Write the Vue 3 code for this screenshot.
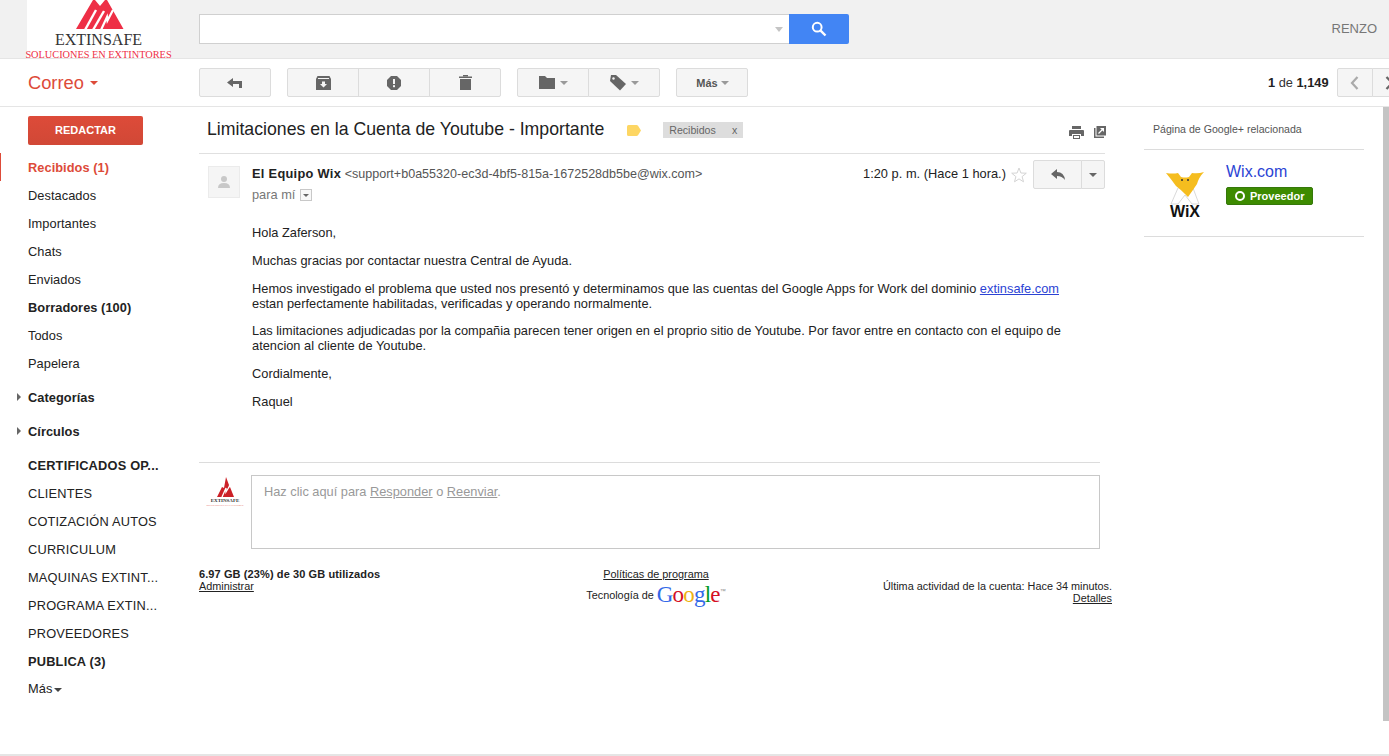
<script setup>
const plainItems = [
  { label: 'Recibidos (1)', cls: 'active' },
  { label: 'Destacados' },
  { label: 'Importantes' },
  { label: 'Chats' },
  { label: 'Enviados' },
  { label: 'Borradores (100)', cls: 'bold' },
  { label: 'Todos' },
  { label: 'Papelera' }
]
const labels = [
  { label: 'CERTIFICADOS OP...', cls: 'bold' },
  { label: 'CLIENTES' },
  { label: 'COTIZACIÓN AUTOS' },
  { label: 'CURRICULUM' },
  { label: 'MAQUINAS EXTINT...' },
  { label: 'PROGRAMA EXTIN...' },
  { label: 'PROVEEDORES' },
  { label: 'PUBLICA (3)', cls: 'bold' }
]
</script>

<template>
  <div class="page">
    <header class="topbar">
      <div class="logo">
        <svg class="logo-mark" width="48" height="30" viewBox="0 0 48 30">
          <polygon points="0,29 17,0 19,0 24,6 29,0 31,0 47.5,29" fill="#ee2f46" />
          <path d="M9 30 L20 10" fill="none" stroke="#fff" stroke-width="2.4" />
          <path d="M17 30 L28 11" fill="none" stroke="#fff" stroke-width="2.4" />
          <path d="M25 30 L31 17 L31.5 20.5 L37 10" fill="none" stroke="#fff" stroke-width="2.2" />
        </svg>
        <div class="logo-name">EXTINSAFE</div>
        <div class="logo-sub">SOLUCIONES EN EXTINTORES</div>
      </div>
      <div class="search">
        <div class="search-input"><span class="search-caret"></span></div>
        <div class="search-btn">
          <svg width="16" height="16" viewBox="0 0 16 16">
            <circle cx="6.2" cy="6.2" r="4.4" fill="none" stroke="#fff" stroke-width="2" />
            <path d="M9.6 9.6 L14.5 14.5" stroke="#fff" stroke-width="2.4" />
          </svg>
        </div>
      </div>
      <div class="user">RENZO</div>
    </header>

    <div class="toolbar">
      <div class="correo">Correo <span class="correo-caret"></span></div>
      <div class="tools">
        <div class="btn-group g-reply">
          <div class="tbtn w72">
            <svg width="16" height="12" viewBox="0 0 16 12"><path d="M0 5.5 L6 1 V4 H15 V11 H12 V7 H6 V10 Z" fill="#666" /></svg>
          </div>
        </div>
        <div class="btn-group g-actions">
          <div class="tbtn w72">
            <svg width="15" height="14" viewBox="0 0 15 14"><path d="M1.5 0 H13.5 L15 3 V14 H0 V3 Z" fill="#666" /><path d="M2 2.5 H13" stroke="#f5f5f5" stroke-width="1" /><path d="M6 5.5 H9 V8 H11 L7.5 11.5 L4 8 H6 Z" fill="#f5f5f5" /></svg>
          </div>
          <div class="tbtn w72">
            <svg width="14" height="14" viewBox="0 0 14 14"><path d="M4 0 H10 L14 4 V10 L10 14 H4 L0 10 V4 Z" fill="#666" /><rect x="6" y="3" width="2" height="5" fill="#f5f5f5" /><rect x="6" y="9.2" width="2" height="2" fill="#f5f5f5" /></svg>
          </div>
          <div class="tbtn w72">
            <svg width="13" height="15" viewBox="0 0 13 15"><rect x="0" y="1.5" width="13" height="1.5" fill="#666" /><rect x="4" y="0" width="5" height="1.5" fill="#666" /><rect x="1" y="4" width="11" height="11" fill="#666" /></svg>
          </div>
        </div>
        <div class="btn-group g-move">
          <div class="tbtn w72 icon-caret">
            <svg width="16" height="13" viewBox="0 0 16 13"><path d="M0 0 H6 L8 2 H16 V13 H0 Z" fill="#666" /></svg>
            <span class="caret"></span>
          </div>
          <div class="tbtn w72 icon-caret">
            <svg width="16" height="16" viewBox="0 0 16 16"><path d="M1 0 H6 L16 9 L10 15.5 L0 6 Z" fill="#666" /><circle cx="3.5" cy="3.5" r="1.2" fill="#f5f5f5" /></svg>
            <span class="caret"></span>
          </div>
        </div>
        <div class="btn-group">
          <div class="tbtn w72 mas">Más <span class="caret mas-caret"></span></div>
        </div>
      </div>
      <div class="pager">
        <span class="pager-text"><b>1</b> de <b>1,149</b></span>
        <div class="btn-group pager-btns">
          <div class="tbtn pbtn">
            <svg width="9" height="14" viewBox="0 0 9 14"><path d="M7.5 1 L2 7 L7.5 13" fill="none" stroke="#aaa" stroke-width="2.2" /></svg>
          </div>
          <div class="tbtn pbtn">
            <svg width="9" height="14" viewBox="0 0 9 14"><path d="M1.5 1 L7 7 L1.5 13" fill="none" stroke="#666" stroke-width="2.2" /></svg>
          </div>
        </div>
      </div>
    </div>

    <div class="main">
      <aside class="sidebar">
        <div class="compose">REDACTAR</div>
        <nav class="nav">
          <div v-for="item in plainItems" :key="item.label" class="nav-item" :class="item.cls">{{ item.label }}</div>
          <div class="nav-item bold group-row"><span class="tri"></span>Categorías</div>
          <div class="nav-item bold group-row"><span class="tri"></span>Círculos</div>
          <div class="labels">
            <div v-for="item in labels" :key="item.label" class="nav-item label-item" :class="item.cls">{{ item.label }}</div>
          </div>
          <div class="nav-item more">Más<span class="more-caret"></span></div>
        </nav>
      </aside>

      <main class="content">
        <div class="subject">
          <h1 class="subject-title">Limitaciones en la Cuenta de Youtube - Importante</h1>
          <svg class="marker" width="14" height="11" viewBox="0 0 14 11"><path d="M1.5 0 H9.5 Q10.5 0 11 .7 L14 5.5 L11 10.3 Q10.5 11 9.5 11 H1.5 Q0 11 0 9.5 V1.5 Q0 0 1.5 0 Z" fill="#fdd663" /></svg>
          <span class="chip">Recibidos<span class="chip-x">x</span></span>
          <div class="subject-icons">
            <svg width="15" height="13" viewBox="0 0 15 13"><rect x="3" y="0" width="9" height="3" fill="#666" /><path d="M1 4 H14 Q15 4 15 5 V10 H12 V8 H3 V10 H0 V5 Q0 4 1 4 Z" fill="#666" /><rect x="4" y="9" width="7" height="4" fill="#666" /><rect x="5" y="10" width="5" height="2" fill="#fff" /></svg>
            <svg width="12" height="12" viewBox="0 0 12 12"><path d="M0 2 H1.5 V10.5 H10 V12 H0 Z" fill="#666" /><rect x="2.5" y="0" width="9.5" height="9.5" fill="#666" /><path d="M4.5 7.5 L9 3" stroke="#fff" stroke-width="1.3" /><path d="M6 2 H10 V6 Z" fill="#fff" /></svg>
          </div>
        </div>

        <div class="message">
          <div class="avatar">
            <svg width="14" height="14" viewBox="0 0 14 14"><circle cx="7" cy="4" r="3" fill="#c8c8c8" /><path d="M1 13 Q1 8 7 8 Q13 8 13 13 Z" fill="#c8c8c8" /></svg>
          </div>
          <div class="msg-main">
            <div class="msg-head">
              <div class="msg-from">
                <div class="from-line"><b class="from-name">El Equipo Wix</b> <span class="from-mail">&lt;support+b0a55320-ec3d-4bf5-815a-1672528db5be@wix.com&gt;</span></div>
                <div class="to-line">para mí <span class="to-btn"><span class="to-caret"></span></span></div>
              </div>
              <div class="msg-meta">
                <span class="msg-time">1:20 p. m. (Hace 1 hora.)</span>
                <svg class="star" width="16" height="16" viewBox="0 0 16 16"><path d="M8 1 L9.9 6 L15.3 6.2 L11.1 9.6 L12.5 14.8 L8 11.9 L3.5 14.8 L4.9 9.6 L0.7 6.2 L6.1 6 Z" fill="none" stroke="#d4d4d4" stroke-width="1" /></svg>
                <div class="btn-group reply-group">
                  <div class="tbtn reply-btn">
                    <svg width="14" height="12" viewBox="0 0 14 12"><path d="M0 5 L6 0 V3 Q13 3 14 11 Q11 7 6 7 V10 Z" fill="#666" /></svg>
                  </div>
                  <div class="tbtn reply-more"><span class="caret dark"></span></div>
                </div>
              </div>
            </div>
            <div class="msg-body">
              <p>Hola Zaferson,</p>
              <p>Muchas gracias por contactar nuestra Central de Ayuda.</p>
              <p class="tight">Hemos investigado el problema que usted nos presentó y determinamos que las cuentas del Google Apps for Work del dominio <a class="link">extinsafe.com</a><br />estan perfectamente habilitadas, verificadas y operando normalmente.</p>
              <p>Las limitaciones adjudicadas por la compañia parecen tener origen en el proprio sitio de Youtube. Por favor entre en contacto con el equipo de<br />atencion al cliente de Youtube.</p>
              <p>Cordialmente,</p>
              <p>Raquel</p>
            </div>
          </div>
        </div>

        <div class="reply-area">
          <div class="reply-avatar">
            <svg width="28" height="22" viewBox="0 0 28 22">
              <polygon points="6,21 11,11 13,12 15,1 18,9 17,12 19,11 23,21" fill="#cc2027" />
              <path d="M11 21 L15 12 L15 16 L18 11" fill="none" stroke="#fff" stroke-width="1.3" />
            </svg>
            <div class="ra-name">EXTINSAFE</div>
            <div class="ra-sub">SOLUCIONES EN EXTINTORES</div>
          </div>
          <div class="reply-box">Haz clic aquí para <u>Responder</u> o <u>Reenviar</u>.</div>
        </div>

        <footer class="foot">
          <div class="foot-left"><b>6.97 GB (23%) de 30 GB utilizados</b><br /><u>Administrar</u></div>
          <div class="foot-center">
            <u>Políticas de programa</u>
            <div class="tech">Tecnología de <span class="google"><i class="gb">G</i><i class="gr">o</i><i class="gy">o</i><i class="gb">g</i><i class="gg">l</i><i class="gr">e</i></span><span class="tm">™</span></div>
          </div>
          <div class="foot-right">Última actividad de la cuenta: Hace 34 minutos.<br /><u>Detalles</u></div>
        </footer>
      </main>

      <aside class="side">
        <div class="side-title">Página de Google+ relacionada</div>
        <div class="side-card">
          <div class="wix-logo">
            <svg width="38" height="42" viewBox="0 0 38 42">
              <path d="M12 24 L19 19 L27 24 L33 40 L26 40 L19 31 L12 40 L5 40 Z" fill="#fff" stroke="#cfcfcf" stroke-width="0.8" />
              <path d="M0 9 Q7 10 12 9 L15 13 Q19 14 23 13 L26 9 Q32 10 38 8 Q33 13 31 20 Q27 26 22 33 L19 30 Q14 25 10 22 Q5 15 0 9 Z" fill="#f5bd1f" />
              <circle cx="16" cy="16" r="1" fill="#333" />
              <circle cx="22" cy="16" r="1" fill="#333" />
            </svg>
            <div class="wix-text">WiX</div>
          </div>
          <div class="side-info">
            <div class="side-name">Wix.com</div>
            <div class="badge"><span class="badge-dot"></span>Proveedor</div>
          </div>
        </div>
      </aside>

      <div class="scrollbar"></div>
    </div>
    <div class="bottom-line"></div>
  </div>
</template>

<style>
html, body { margin: 0; padding: 0; background: #fff; overflow: hidden; }
</style>

<style scoped>
.page {
  width: 1389px;
  height: 756px;
  display: flex;
  flex-direction: column;
  overflow: hidden;
  font-family: "Liberation Sans", Arial, sans-serif;
  font-size: 12.8px;
  color: #222;
  background: #fff;
}
.topbar {
  height: 59px;
  box-sizing: border-box;
  flex: none;
  display: flex;
  background: #f1f1f1;
  border-bottom: 1px solid #e5e5e5;
  padding-left: 27px;
}
.logo {
  width: 143px;
  height: 58px;
  background: #fff;
  display: flex;
  flex-direction: column;
  align-items: center;
  font-family: "Liberation Serif", serif;
}
.logo-mark { flex: none; margin-left: 2px; }
.logo-name { font-size: 16px; line-height: 16px; color: #333; margin-top: 2px; }
.logo-sub { font-size: 10.3px; line-height: 9px; color: #ee2f46; margin-top: 2px; white-space: nowrap; }
.search { display: flex; margin: 14px 0 0 29px; height: 30px; }
.search-input {
  width: 590px;
  box-sizing: border-box;
  height: 30px;
  background: #fff;
  border: 1px solid #d0d0d0;
  border-right: none;
  position: relative;
}
.search-caret {
  position: absolute;
  right: 6px;
  top: 12px;
  border: 4px solid transparent;
  border-top: 5px solid #c4c4c4;
  border-bottom: none;
}
.search-btn {
  width: 60px;
  height: 30px;
  background: #4285f4;
  display: flex;
  align-items: center;
  justify-content: center;
  border-radius: 0 2px 2px 0;
}
.user { margin-left: auto; margin-right: 12px; margin-top: 21px; color: #777; font-size: 13px; line-height: 16px; }

.toolbar {
  height: 48px;
  flex: none;
  display: flex;
  box-sizing: border-box;
  border-bottom: 1px solid #e5e5e5;
  position: relative;
  overflow: hidden;
}
.correo {
  width: 199px;
  box-sizing: border-box;
  padding: 13px 0 0 28px;
  font-size: 18.3px;
  line-height: 22px;
  color: #dd4b39;
  flex: none;
}
.correo-caret {
  display: inline-block;
  vertical-align: middle;
  margin-left: 1px;
  margin-top: -2px;
  border: 4px solid transparent;
  border-top: 4px solid #dd4b39;
  border-bottom: none;
}
.tools { display: flex; padding-top: 9px; }
.btn-group { display: flex; height: 29px; }
.g-reply, .g-actions, .g-move { margin-right: 16px; }
.tbtn {
  box-sizing: border-box;
  height: 29px;
  background: #f5f5f5;
  border: 1px solid #dcdcdc;
  display: flex;
  align-items: center;
  justify-content: center;
  margin-left: -1px;
  flex: none;
}
.btn-group .tbtn:first-child { border-radius: 2px 0 0 2px; margin-left: 0; }
.btn-group .tbtn:last-child { border-radius: 0 2px 2px 0; }
.btn-group .tbtn:only-child { border-radius: 2px; }
.w72 { width: 72px; }
.icon-caret { gap: 5px; }
.caret {
  display: inline-block;
  border: 4px solid transparent;
  border-top: 4px solid #999;
  border-bottom: none;
}
.caret.dark { border-top-color: #666; }
.mas { font-size: 11px; font-weight: bold; color: #555; gap: 3px; padding-left: 1px; }
.mas-caret { margin-top: 1px; }
.pager {
  position: absolute;
  left: 1268px;
  top: 9px;
  display: flex;
  align-items: center;
  white-space: nowrap;
}
.pager-text { font-size: 12.8px; color: #333; margin-right: 8px; }
.pager-text b { color: #222; }
.pbtn { width: 36px; }

.main { flex: 1; display: flex; position: relative; min-height: 0; }
.sidebar { width: 199px; flex: none; padding-top: 9px; box-sizing: border-box; }
.compose {
  margin-left: 28px;
  width: 115px;
  height: 29px;
  box-sizing: border-box;
  padding-bottom: 2px;
  background: linear-gradient(#dd4b39, #d14836);
  border-radius: 2px;
  color: #fff;
  font-size: 11px;
  font-weight: bold;
  display: flex;
  align-items: center;
  justify-content: center;
}
.nav { margin-top: 8px; }
.nav-item {
  height: 28px;
  line-height: 30px;
  padding-left: 28px;
  color: #222;
  white-space: nowrap;
  box-sizing: border-box;
  position: relative;
  letter-spacing: 0.05px;
}
.label-item { letter-spacing: 0.2px; }
.nav-item.bold { font-weight: bold; }
.nav-item.active {
  font-weight: bold;
  color: #dd4b39;
  border-left: 1px solid #dd4b39;
  padding-left: 27px;
}
.group-row { margin-top: 6px; }
.tri {
  position: absolute;
  left: 17px;
  top: 10px;
  border: 4px solid transparent;
  border-left: 4px solid #666;
  border-right: none;
}
.labels { margin-top: 6px; }
.more { line-height: 28px; }
.more-caret {
  display: inline-block;
  vertical-align: middle;
  margin-left: 2px;
  border: 4px solid transparent;
  border-top: 4px solid #444;
  border-bottom: none;
}

.content { width: 913px; flex: none; }
.subject {
  height: 47px;
  width: 906px;
  box-sizing: border-box;
  display: flex;
  align-items: center;
  border-bottom: 1px solid #e0e0e0;
  padding: 0 0 2px 8px;
  position: relative;
}
.subject-title { margin: 0; font-size: 17.7px; font-weight: normal; color: #222; line-height: 22px; white-space: nowrap; }
.marker { margin: 2px 0 0 23px; flex: none; }
.chip {
  margin: 2px 0 0 22px;
  background: #dddddd;
  color: #666;
  font-size: 10.6px;
  height: 16px;
  line-height: 16px;
  width: 80px;
  padding: 0 6px;
  box-sizing: border-box;
  display: flex;
  justify-content: space-between;
}
.subject-icons { margin: 6px -1px 0 auto; display: flex; align-items: center; gap: 10px; }
.message { display: flex; padding-left: 9px; width: 906px; box-sizing: border-box; padding-top: 12px; }
.avatar {
  width: 32px;
  height: 32px;
  background: #f5f5f5;
  border: 1px solid #ebebeb;
  box-sizing: border-box;
  display: flex;
  align-items: center;
  justify-content: center;
  flex: none;
  margin-right: 12px;
}
.msg-main { flex: 1; min-width: 0; }
.msg-head { display: flex; justify-content: space-between; margin-top: -6px; }
.msg-from { padding-top: 6px; }
.from-line { line-height: 16px; white-space: nowrap; }
.from-name { color: #222; letter-spacing: 0.3px; }
.from-mail { font-size: 12.55px; color: #555; }
.to-line { color: #777; line-height: 16px; margin-top: 5px; display: flex; align-items: center; gap: 5px; }
.to-btn {
  width: 12px;
  height: 12px;
  box-sizing: border-box;
  border: 1px solid #c8c8c8;
  background: #f8f8f8;
  display: flex;
  align-items: center;
  justify-content: center;
}
.to-caret { border: 3px solid transparent; border-top: 3px solid #666; border-bottom: none; }
.msg-meta { display: flex; align-items: center; height: 29px; }
.msg-time { white-space: nowrap; color: #222; margin-top: -2px; letter-spacing: 0.03px; }
.star { margin: 0 6px 0 5px; }
.reply-btn { width: 49px; }
.reply-more { width: 24px; }
.msg-body { margin-top: 22px; line-height: 15px; color: #222; letter-spacing: 0.015px; }
.msg-body p { margin: 0 0 13px; }
.msg-body p.tight { margin-bottom: 12px; }
.link { color: #2b43d4; text-decoration: underline; }

.reply-area {
  width: 901px;
  box-sizing: border-box;
  margin-top: 40px;
  border-top: 1px solid #dcdcdc;
  padding-top: 12px;
  display: flex;
}
.reply-avatar {
  width: 52px;
  flex: none;
  display: flex;
  flex-direction: column;
  align-items: center;
  padding-top: 1px;
  font-family: "Liberation Serif", serif;
}
.ra-name { font-size: 5px; font-weight: bold; line-height: 6px; color: #333; }
.ra-sub { font-size: 2.6px; line-height: 3px; color: #dd4b39; white-space: nowrap; }
.reply-box {
  flex: 1;
  height: 74px;
  box-sizing: border-box;
  border: 1px solid #c8c8c8;
  padding: 8px 12px;
  color: #999;
  line-height: 16px;
}
.foot {
  width: 913px;
  position: relative;
  height: 60px;
  margin-top: 19px;
  font-size: 10.85px;
  line-height: 12px;
  color: #222;
}
.foot-left { position: absolute; left: 0; top: 0; }
.foot-left b { font-size: 11px; letter-spacing: 0.1px; }
.foot-center { position: absolute; left: 372px; top: 0; width: 170px; text-align: center; }
.foot-right { position: absolute; right: 0; top: 12px; text-align: right; }
.tech { display: flex; align-items: center; justify-content: center; margin-top: 3px; height: 24px; white-space: nowrap; gap: 3px; font-size: 10.85px; }
.google { font-family: "Liberation Serif", serif; font-size: 23px; line-height: 24px; letter-spacing: -0.8px; }
.google i { font-style: normal; }
.gb { color: #3369e8; }
.gr { color: #d50f25; }
.gy { color: #eeb211; }
.gg { color: #009925; }
.tm { font-size: 6px; color: #888; margin-left: -3px; margin-top: -8px; }

.side { width: 220px; flex: none; margin-left: 32px; }
.side-title {
  height: 43px;
  box-sizing: border-box;
  padding: 16px 0 0 9px;
  border-bottom: 1px solid #dcdcdc;
  font-size: 10.6px;
  line-height: 13px;
  color: #555;
}
.side-card {
  height: 87px;
  box-sizing: border-box;
  border-bottom: 1px solid #dcdcdc;
  display: flex;
  padding-top: 14px;
}
.wix-logo {
  width: 38px;
  margin-left: 22px;
  position: relative;
  flex: none;
  height: 50px;
}
.wix-text {
  position: absolute;
  left: 0;
  top: 39px;
  width: 38px;
  text-align: center;
  font-size: 16px;
  line-height: 18px;
  color: #111;
  font-weight: bold;
}
.side-info { margin-left: 22px; margin-top: -1px; }
.side-name { font-size: 16px; line-height: 18px; color: #2b43d4; }
.badge {
  margin-top: 6px;
  width: 87px;
  height: 18px;
  background: #3d8b00;
  border: 1px solid #35780a;
  border-radius: 2px;
  box-sizing: border-box;
  color: #fff;
  font-size: 11px;
  font-weight: bold;
  display: flex;
  align-items: center;
  padding-left: 8px;
  gap: 5px;
}
.badge-dot {
  width: 10px;
  height: 10px;
  border: 2px solid #fff;
  border-radius: 50%;
  box-sizing: border-box;
}
.scrollbar {
  position: absolute;
  left: 1383px;
  top: 0;
  width: 6px;
  height: 614px;
  background: #c4c4c4;
}
.bottom-line { height: 2px; background: #e5e5e5; flex: none; }
</style>
